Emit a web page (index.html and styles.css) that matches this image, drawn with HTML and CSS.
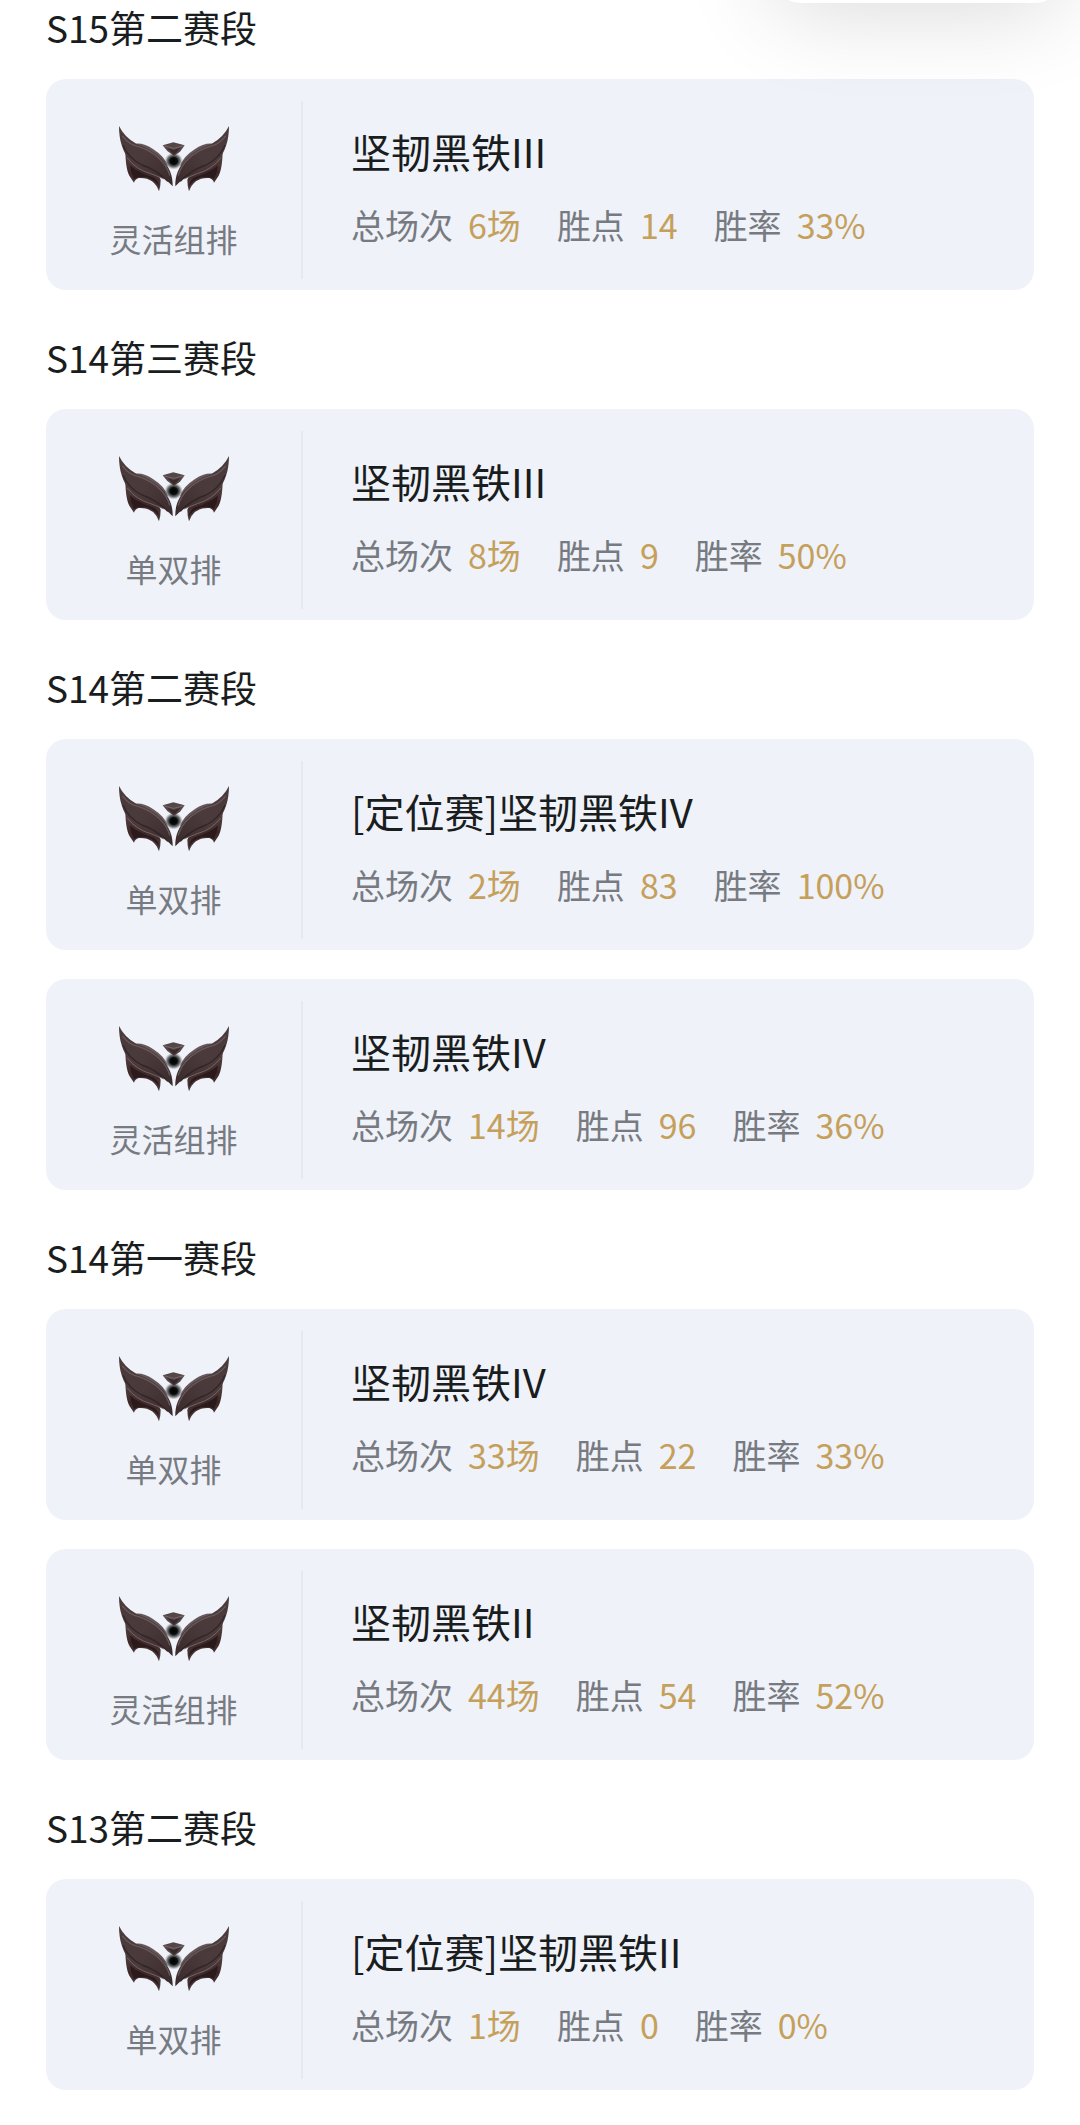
FILE: index.html
```html
<!DOCTYPE html>
<html lang="zh-CN">
<head>
<meta charset="utf-8">
<meta name="viewport" content="width=device-width, initial-scale=1">
<title>历史段位</title>
<link rel="stylesheet" href="styles.css">
</head>
<body>
<svg class="defs" aria-hidden="true">
  <defs>
    <linearGradient id="blade" x1="0" y1="0" x2="1" y2="1">
      <stop offset="0" stop-color="#4a3a3b"/>
      <stop offset=".5" stop-color="#4b3a3b"/>
      <stop offset="1" stop-color="#392a2b"/>
    </linearGradient>
    <linearGradient id="under" x1="0" y1="0" x2="0" y2="1">
      <stop offset="0" stop-color="#5c4a4a"/>
      <stop offset=".55" stop-color="#3e2827"/>
      <stop offset="1" stop-color="#4b3c3e"/>
    </linearGradient>
    <radialGradient id="gem">
      <stop offset="0" stop-color="#000"/>
      <stop offset=".4" stop-color="#0b0d0d"/>
      <stop offset=".7" stop-color="#4d5052" stop-opacity=".75"/>
      <stop offset="1" stop-color="#9a9d9f" stop-opacity="0"/>
    </radialGradient>
  </defs>
  <symbol id="iron" viewBox="45 47 330 198">
    <g id="wing">
      <path fill="url(#under)" d="M64 118 C64 150 68 180 76 196 L90 217 Q93 206 104 203 Q150 200 165 243 Q170 228 170 208 L150 170 Z"/>
      <path fill="#2a1a1b" d="M78 165 C98 184 124 194 150 202 Q164 212 165 228 Q152 208 130 201 Q104 196 90 206 Q80 186 78 165Z"/>
      <path fill="#65575a" d="M94 100 Q122 98 148 117 Q184 140 192 168 L150 145Z"/>
      <path fill="url(#blade)" d="M45 47 Q62 82 98 101 Q142 116 170 143 C196 168 207 195 206 228 Q194 216 184 207 C150 194 100 182 78 152 C56 124 45 90 45 47Z"/>
      <path fill="none" stroke="#75676a" stroke-width="4" stroke-linecap="round" stroke-opacity=".7" d="M56 78 Q76 103 102 108 Q142 120 168 147 Q188 166 197 194"/>
      <path fill="none" stroke="#2c2022" stroke-width="4" stroke-linecap="round" stroke-opacity=".8" d="M58 106 Q74 144 114 164 Q160 180 190 212"/>
      <path fill="none" stroke="#7d6f70" stroke-width="3" stroke-opacity=".8" d="M70 143 Q96 178 140 190 L180 206"/>
    </g>
    <use href="#wing" transform="matrix(-1 0 0 1 420 0)"/>
    <ellipse cx="209" cy="152" rx="28" ry="26" fill="url(#gem)"/>
    <path fill="#554648" d="M176 105 L208 96 L242 105 L228 124 L210 137 L190 122Z"/>
    <path fill="#3a2a2b" d="M190 113 L209 119 L230 112 L210 134Z"/>
    <path fill="none" stroke="#85777a" stroke-width="2" d="M178 106 L209 114 L240 106"/>
  </symbol>
</svg>

<div class="popover"></div>

<main class="seasons">
  <section class="season">
    <h2 class="season-name">S15第二赛段</h2>
    <article class="card">
      <div class="queue"><svg class="emblem" aria-hidden="true"><use href="#iron"/></svg><span class="queue-name">灵活组排</span></div>
      <div class="info">
        <h3 class="rank">坚韧黑铁III</h3>
        <dl class="stats">
          <div class="stat"><dt>总场次</dt><dd>6场</dd></div>
          <div class="stat"><dt>胜点</dt><dd>14</dd></div>
          <div class="stat"><dt>胜率</dt><dd>33%</dd></div>
        </dl>
      </div>
    </article>
  </section>

  <section class="season">
    <h2 class="season-name">S14第三赛段</h2>
    <article class="card">
      <div class="queue"><svg class="emblem" aria-hidden="true"><use href="#iron"/></svg><span class="queue-name">单双排</span></div>
      <div class="info">
        <h3 class="rank">坚韧黑铁III</h3>
        <dl class="stats">
          <div class="stat"><dt>总场次</dt><dd>8场</dd></div>
          <div class="stat"><dt>胜点</dt><dd>9</dd></div>
          <div class="stat"><dt>胜率</dt><dd>50%</dd></div>
        </dl>
      </div>
    </article>
  </section>

  <section class="season">
    <h2 class="season-name">S14第二赛段</h2>
    <article class="card">
      <div class="queue"><svg class="emblem" aria-hidden="true"><use href="#iron"/></svg><span class="queue-name">单双排</span></div>
      <div class="info">
        <h3 class="rank">[定位赛]坚韧黑铁IV</h3>
        <dl class="stats">
          <div class="stat"><dt>总场次</dt><dd>2场</dd></div>
          <div class="stat"><dt>胜点</dt><dd>83</dd></div>
          <div class="stat"><dt>胜率</dt><dd>100%</dd></div>
        </dl>
      </div>
    </article>
    <article class="card">
      <div class="queue"><svg class="emblem" aria-hidden="true"><use href="#iron"/></svg><span class="queue-name">灵活组排</span></div>
      <div class="info">
        <h3 class="rank">坚韧黑铁IV</h3>
        <dl class="stats">
          <div class="stat"><dt>总场次</dt><dd>14场</dd></div>
          <div class="stat"><dt>胜点</dt><dd>96</dd></div>
          <div class="stat"><dt>胜率</dt><dd>36%</dd></div>
        </dl>
      </div>
    </article>
  </section>

  <section class="season">
    <h2 class="season-name">S14第一赛段</h2>
    <article class="card">
      <div class="queue"><svg class="emblem" aria-hidden="true"><use href="#iron"/></svg><span class="queue-name">单双排</span></div>
      <div class="info">
        <h3 class="rank">坚韧黑铁IV</h3>
        <dl class="stats">
          <div class="stat"><dt>总场次</dt><dd>33场</dd></div>
          <div class="stat"><dt>胜点</dt><dd>22</dd></div>
          <div class="stat"><dt>胜率</dt><dd>33%</dd></div>
        </dl>
      </div>
    </article>
    <article class="card">
      <div class="queue"><svg class="emblem" aria-hidden="true"><use href="#iron"/></svg><span class="queue-name">灵活组排</span></div>
      <div class="info">
        <h3 class="rank">坚韧黑铁II</h3>
        <dl class="stats">
          <div class="stat"><dt>总场次</dt><dd>44场</dd></div>
          <div class="stat"><dt>胜点</dt><dd>54</dd></div>
          <div class="stat"><dt>胜率</dt><dd>52%</dd></div>
        </dl>
      </div>
    </article>
  </section>

  <section class="season">
    <h2 class="season-name">S13第二赛段</h2>
    <article class="card">
      <div class="queue"><svg class="emblem" aria-hidden="true"><use href="#iron"/></svg><span class="queue-name">单双排</span></div>
      <div class="info">
        <h3 class="rank">[定位赛]坚韧黑铁II</h3>
        <dl class="stats">
          <div class="stat"><dt>总场次</dt><dd>1场</dd></div>
          <div class="stat"><dt>胜点</dt><dd>0</dd></div>
          <div class="stat"><dt>胜率</dt><dd>0%</dd></div>
        </dl>
      </div>
    </article>
  </section>
</main>
</body>
</html>
```
FILE: styles.css
```css
* {
  box-sizing: border-box;
}

body,
h2,
h3,
dl,
dd {
  margin: 0;
}

body {
  position: relative;
  overflow-x: hidden;
  background: #fff;
  color: #1a1d20;
  font-family: "Noto Sans CJK SC", sans-serif;
}

h2,
h3 {
  font-weight: 400;
}

.defs {
  position: absolute;
  width: 0;
  height: 0;
}

/* Floating panel whose lower edge hangs over the top of the list */
.popover {
  position: absolute;
  top: -157px;
  right: 20px;
  width: 284px;
  height: 160px;
  border-radius: 24px;
  background: #fff;
  box-shadow: 0 4px 96px rgba(0, 0, 0, 0.16);
}

.seasons {
  display: flex;
  flex-direction: column;
  gap: 40px;
  padding: 0 46px 34px;
}

.season-name {
  margin-bottom: 25px;
  font-size: 37px;
  line-height: 54px;
}

.card {
  display: flex;
  border-radius: 20px;
  background: #eff2f9;
}

.card + .card {
  margin-top: 29px;
}

.queue {
  display: flex;
  flex: none;
  flex-direction: column;
  align-items: center;
  gap: 24px;
  width: 255px;
  padding: 47px 0 30px;
}

.emblem {
  width: 110px;
  height: 66px;
}

.queue-name {
  color: #777b81;
  font-size: 32px;
  line-height: 44px;
}

.info {
  display: flex;
  flex: 1;
  flex-direction: column;
  order: 2;
  gap: 22px;
  padding: 44px 24px 41px 0;
}

/* Hairline between the queue and the rank details */
.card::before {
  content: "";
  order: 1;
  flex: none;
  width: 2px;
  margin: 22px 48px 11px 0;
  background: #e6e9f1;
}

.rank {
  font-size: 40px;
  line-height: 56px;
}

.stats {
  display: flex;
  flex-wrap: wrap;
  column-gap: 36px;
  font-size: 34px;
  line-height: 48px;
}

.stat {
  display: flex;
  gap: 15px;
}

dt {
  color: #777b81;
}

dd {
  color: #c5a05a;
}
```
